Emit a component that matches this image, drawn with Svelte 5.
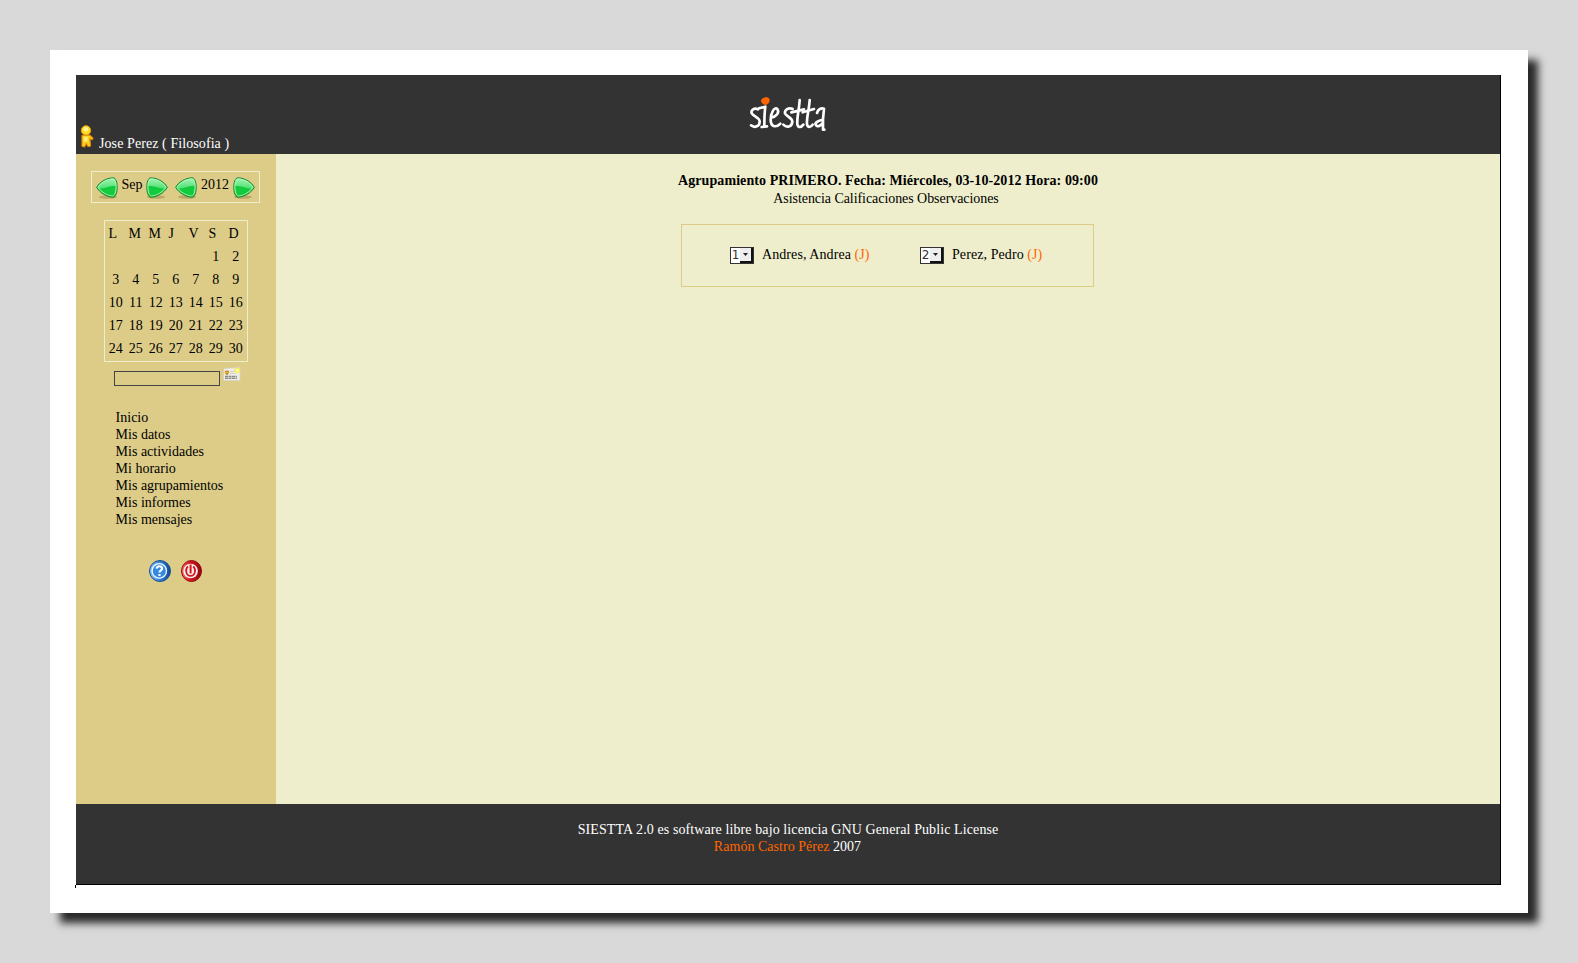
<script>
  const days = ['L', 'M', 'M', 'J', 'V', 'S', 'D'];
  const cells = [...Array(5).fill(''), ...Array.from({ length: 30 }, (_, i) => i + 1)];
  const menu = ['Inicio', 'Mis datos', 'Mis actividades', 'Mi horario', 'Mis agrupamientos', 'Mis informes', 'Mis mensajes'];
  const students = [
    { n: 1, name: 'Andres, Andrea' },
    { n: 2, name: 'Perez, Pedro' }
  ];
</script>

{#snippet arrow(right)}
  <svg class="arrow" class:right width="22" height="22" viewBox="0 0 22 22">
    <ellipse cx="12" cy="20" rx="9" ry="1.700" fill="#9b8348" opacity=".5" />
    <path d="M.7 10.300C3 5.500 10 1 17 .8C20 .8 21.200 5.500 21.200 10.300C21.200 15.300 19.800 20 17 20.200C10.500 20 3.500 15.500 .7 10.300Z" fill="url(#green)" stroke="#128a22" />
    <path d="M2.200 10.300C5 5.900 11 2.200 16.700 2C18.900 2 20 6.200 20 10.300C20 14.600 18.800 18.700 16.800 18.900C11 18.600 5 14.800 2.200 10.300Z" fill="none" stroke="#b6f5c2" stroke-width=".9" />
    <path d="M3.500 11.200C8 12.500 13 8.500 19.500 8.800C19.600 12.500 18.500 18 16.600 18.200C12 17.900 7 15.200 3.500 11.200Z" fill="#12cb3c" />
  </svg>
{/snippet}

<div class="paper">
  <div class="app">
    <header>
      <div class="user">
        <svg width="14" height="24" viewBox="0 0 14 24">
          <path d="M2 10.500L9.500 10L13 13.200L12 14.800L9.800 13.500L10.600 21L8 21.500L6.300 18.500L4.500 22L2 21.300Z" fill="#ffd21e" stroke="#e88c08" stroke-width="1.100" stroke-linejoin="round" />
          <path d="M3.500 12L7.500 11.700L7.800 16L4 17Z" fill="#fff07a" />
          <circle cx="6" cy="5.400" r="4.700" fill="#ffdc20" stroke="#ee9408" />
          <circle cx="5.800" cy="4.200" r="2.400" fill="#fff59a" />
        </svg>
        <span>Jose Perez ( Filosofia )</span>
      </div>
      <svg class="logo" width="110" height="60" viewBox="0 0 330 180" role="img" aria-label="siestta">
        <g fill="none" stroke="#fff" stroke-width="8" stroke-linecap="round" stroke-linejoin="round">
          <path d="M84 73C72 67 62 76 65 85C69 94 88 96 89 109C90 124 74 130 63 121" />
          <path d="M87 70L106 65C103 86 103 104 103 124M95 126L111 124" />
          <path d="M123 98C140 95 149 82 142 72C133 64 122 84 122 104C122 124 136 130 151 116" />
          <path d="M188 72C176 66 163 75 165 85C168 94 187 98 187 110C186 126 170 129 160 119" />
          <path d="M209 45C208 70 200 100 202 118C205 130 214 127 220 119M184 82L222 73" />
          <path d="M239 45C238 70 229 100 231 118C234 129 243 127 248 119M218 82L252 72" />
          <path d="M261 84C264 74 272 68 282 71C279 92 278 112 279 134L283 134M277 104C262 108 253 114 258 121C264 127 274 121 278 114" />
        </g>
        <path d="M93 46C96 39 107 34 115 38C122 43 119 54 112 58C105 63 98 57 94 52Z" fill="#f60" />
      </svg>
    </header>

    <div class="body">
      <aside>
        <div class="period">
          {@render arrow(false)}<span class="month">Sep</span>{@render arrow(true)}
          <i></i>
          {@render arrow(false)}<span class="year">2012</span>{@render arrow(true)}
        </div>
        <div class="calendar">
          {#each days as d}<b>{d}</b>{/each}
          {#each cells as c}<span>{c}</span>{/each}
        </div>
        <div class="search">
          <input type="text" aria-label="Buscar" />
          <svg width="18" height="15" viewBox="0 0 18 15">
            <path d="M1 1.500L17 .5V13.500H.5Z" fill="#eeede7" stroke="#d6d2c4" stroke-width=".7" />
            <path d="M2 9.500H14M2 11.300H14" stroke="#8c8c86" stroke-width="1.300" stroke-dasharray="3 .5" />
            <path d="M7 4.500H12M7 6.500H12" stroke="#cfcfc9" />
            <circle cx="4" cy="5.500" r="2.300" fill="#e9b737" /><path d="M2.500 4L3.500 5M5.500 4L4.700 5M3 7H5" stroke="#76511f" stroke-width=".8" />
            <circle cx="14.300" cy="3.500" r="2.800" fill="#f6ed4b" /><circle cx="14.300" cy="3.500" r="1.400" fill="#fffcb5" />
          </svg>
        </div>
        <nav>
          {#each menu as m}<a href="#top">{m}</a>{/each}
        </nav>
        <div class="actions">
          <svg width="22" height="22" viewBox="0 0 22 22">
            <circle cx="11" cy="11" r="10.500" fill="url(#blue)" stroke="#174f99" />
            <circle cx="10.300" cy="10.900" r="7.200" fill="#3389e4" stroke="#f5faff" stroke-width="1.300" />
            <path d="M7.600 8.700C8 5.400 13.200 5.500 13.100 8.500C13 10.500 10.500 10.500 10.500 12.500M10.500 14V16" fill="none" stroke="#fff" stroke-width="2.200" />
          </svg>
          <svg width="21" height="22" viewBox="0 0 21 22">
            <ellipse cx="10.500" cy="11" rx="10" ry="10.500" fill="url(#red)" stroke="#930b12" />
            <circle cx="9.600" cy="11" r="7.300" fill="#f8eeee" />
            <path d="M7 6.500C3.800 9 4.800 15.900 9.600 15.900C14.400 15.900 15.400 9 12.200 6.500" fill="none" stroke="#d8141b" stroke-width="1.700" />
            <path d="M9.600 4.500V13.500" stroke="#d8141b" stroke-width="2" />
          </svg>
        </div>
      </aside>

      <main>
        <h1>Agrupamiento PRIMERO. Fecha: Miércoles, 03-10-2012 Hora: 09:00</h1>
        <p class="tabs">Asistencia Calificaciones Observaciones</p>
        <section>
          {#each students as s}
            <div class="student">
              <span class="select">
                <span class="num">{s.n}</span>
                <span class="drop"><svg width="5" height="3" viewBox="0 0 5 3"><path d="M0 0H5L2.500 3Z" fill="#222" /></svg></span>
              </span>
              <span class="name">{s.name} <em>(J)</em></span>
            </div>
          {/each}
        </section>
      </main>
    </div>

    <footer>
      <p class="license">SIESTTA 2.0 es software libre bajo licencia GNU General Public License</p>
      <p class="author"><em>Ramón Castro Pérez</em> 2007</p>
    </footer>
  </div>
  <div class="tick"></div>
</div>

<svg class="defs" width="0" height="0">
  <defs>
    <linearGradient id="green" x1="0" y1="0" x2="0" y2="1"><stop offset="0" stop-color="#a5f5b4" /><stop offset=".5" stop-color="#58e27a" /><stop offset="1" stop-color="#12b834" /></linearGradient>
    <linearGradient id="blue"><stop offset="0" stop-color="#8cc2f5" /><stop offset=".45" stop-color="#3987dc" /><stop offset="1" stop-color="#104790" /></linearGradient>
    <linearGradient id="red"><stop offset="0" stop-color="#f26a6a" /><stop offset=".45" stop-color="#d5141c" /><stop offset="1" stop-color="#8c080e" /></linearGradient>
  </defs>
</svg>

<style>
  :global(body) { background: #d9d9d9; overflow: hidden; }
  .defs { position: absolute; }
  .paper {
    box-sizing: border-box;
    width: 1478px;
    height: 863px;
    margin: 50px;
    padding: 25px 27px 0 26px;
    background: #fff;
    box-shadow: 10px 10px 8px #292929;
    font: 14px/17px "Liberation Serif", "Times New Roman", serif;
    color: #000;
  }
  .app {
    display: flex;
    flex-direction: column;
    height: 809px;
    width: 1424px;
    border-right: 1px solid #000;
    border-bottom: 1px solid #000;
  }
  .tick { width: 1px; height: 3px; margin-left: -1px; background: #000; }
  header {
    height: 79px;
    background: #333;
    color: #fff;
    display: grid;
    grid-template-columns: 1fr 110px 1fr;
  }
  .user { display: flex; align-items: flex-end; gap: 5px; padding: 0 0 2px 4px; letter-spacing: .08px; }
  .user svg { margin: 0 0 3px 0; }
  .logo { margin: 10px 0 0 -3px; }
  .body { flex: 1; display: flex; min-height: 0; }
  aside { width: 200px; background: #dc8; display: flex; flex-direction: column; }
  .period {
    box-sizing: border-box;
    width: 169px;
    height: 32px;
    margin: 17px 0 0 15px;
    padding: 4px 0 0 4px;
    border: 1px solid #eec;
    display: flex;
  }
  .period i { width: 7px; }
  .arrow { display: block; flex: none; margin-top: 1px; }
  .arrow.right { transform: scaleX(-1); }
  .month { width: 28px; text-align: center; }
  .year { width: 36px; text-align: center; }
  .calendar {
    box-sizing: border-box;
    width: 144px;
    height: 142px;
    margin: 17px 0 0 28px;
    padding: 1px 0 0 2px;
    border: 1px solid #eec;
    display: grid;
    grid-template-columns: repeat(7, 20px);
    grid-template-rows: repeat(6, 23px);
    line-height: 23px;
  }
  .calendar b { font-weight: 400; padding-left: 1.500px; }
  .calendar span { text-align: center; padding-right: 2.500px; }
  .search { display: flex; margin: 5px 0 0 38px; height: 20px; }
  .search input {
    box-sizing: border-box;
    width: 106px;
    height: 15px;
    margin: 4px 3px 0 0;
    padding: 0;
    border: 1px solid #444;
    background: transparent;
  }
  nav { display: flex; flex-direction: column; margin: 22px 0 0 39.600px; }
  a { color: inherit; text-decoration: none; }
  .actions { display: flex; gap: 10px; margin: 32px 0 0 73px; }
  main { flex: 1; background: #eec; display: flex; flex-direction: column; align-items: center; }
  h1 { font-size: 14px; line-height: 18px; margin: 18px 0 0; letter-spacing: .08px; }
  p { margin: 0; }
  .tabs { letter-spacing: -.06px; line-height: 18px; margin-right: 4px; }
  section {
    box-sizing: border-box;
    width: 413px;
    height: 63px;
    margin: 16px 1px 0 0;
    padding: 21px 0 0 48px;
    border: 1px solid #dc8;
    display: flex;
    gap: 51px;
  }
  .student { display: flex; height: 18px; flex: none; }
  .name { letter-spacing: .08px; white-space: nowrap; }
  .student:first-child { width: 139px; }
  .select {
    box-sizing: border-box;
    display: flex;
    width: 24px;
    height: 17px;
    border: 1px solid #333;
    background: #fff;
    margin: 1px 8px 0 0;
  }
  .num { width: 9px; text-align: center; font: 12px/15px "DejaVu Sans", sans-serif; color: #333; }
  .drop {
    box-sizing: border-box;
    width: 13px;
    height: 15px;
    display: flex;
    align-items: center;
    justify-content: center;
    background: #eee;
    border-right: 2px solid #111;
    border-bottom: 2px solid #111;
  }
  em { color: #f60; font-style: normal; }
  footer { height: 80px; box-sizing: border-box; padding-top: 17px; background: #333; color: #fff; text-align: center; }
  .license { letter-spacing: .1px; }
  .author { margin-right: 1px; letter-spacing: .03px; }
</style>
